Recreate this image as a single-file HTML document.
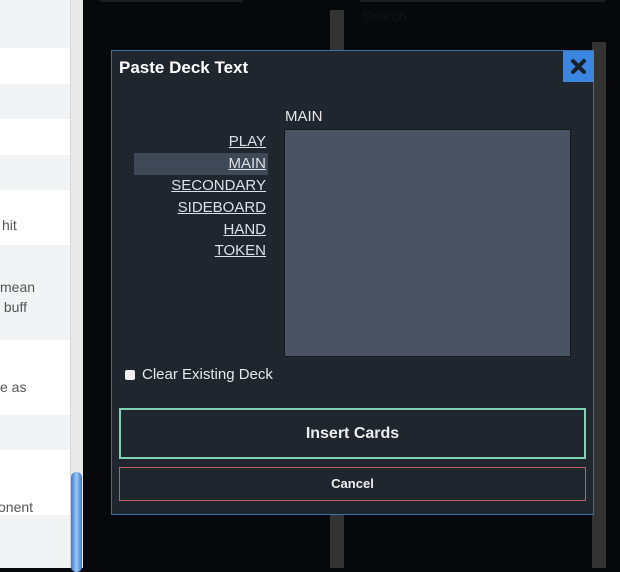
<!DOCTYPE html>
<html><head><style>
*{margin:0;padding:0;box-sizing:border-box}
body{width:620px;height:568px;overflow:hidden;background:#07080b;font-family:"Liberation Sans",Arial,sans-serif;position:relative}
.a{position:absolute}
.row{position:absolute;left:0;width:70px;color:#555;font-size:14px}
.lbl{position:absolute;right:0;width:100%;text-align:right;color:#dde0e4;font-size:15px;text-decoration:underline;line-height:22px;padding-right:2px}
</style></head><body>
<div class="a" style="left:0;top:0;width:70px;height:568px;background:#f2f3f5"></div>
<div class="row" style="top:48px;height:36px;background:#fff"></div>
<div class="row" style="top:119px;height:36px;background:#fff"></div>
<div class="row" style="top:190px;height:55px;background:#fff"><span class="a" style="left:2px;top:27px">hit</span></div>
<div class="row" style="top:245px;height:95px"><span class="a" style="left:0px;top:32px;line-height:20px">mean<br>&nbsp;buff</span></div>
<div class="row" style="top:340px;height:75px;background:#fff"><span class="a" style="left:0px;top:39px">e as</span></div>
<div class="row" style="top:450px;height:65px;background:#fff"><span class="a" style="left:-2px;top:49px">onent</span></div>
<div class="a" style="left:70px;top:0;width:13px;height:568px;background:#e9e9ea;border-left:1px solid #d8d8d8"></div>
<div class="a" style="left:71px;top:472px;width:11px;height:100px;background:linear-gradient(90deg,#3a78d0,#9cc8f4,#3a78d0);border-radius:5px"></div>
<div class="a" style="left:100px;top:0;width:143px;height:2px;background:#1a1c20"></div>
<div class="a" style="left:360px;top:0;width:245px;height:2px;background:#1a1c20"></div>
<div class="a" style="left:330px;top:10px;width:14px;height:558px;background:#333"></div>
<div class="a" style="left:592px;top:42px;width:14px;height:526px;background:#333"></div>
<div class="a" style="left:362px;top:8px;color:#111317;font-size:14px">Search</div>
<div class="a" style="left:111px;top:50px;width:483px;height:465px;background:#20262e;border:1px solid #3b6fa8">
  <div class="a" style="left:7px;top:7px;color:#fff;font-weight:bold;font-size:17px">Paste Deck Text</div>
  <div class="a" style="left:451px;top:0;width:31px;height:31px;background:#3b86e0"><svg width="31" height="31" viewBox="0 0 31 31"><path d="M10 10L21 21M21 10L10 21" stroke="#1b1f26" stroke-width="4" stroke-linecap="round"/></svg></div>
  <div class="a" style="left:173px;top:57px;color:#e6e8ea;font-size:15px">MAIN</div>
  <div class="a" style="left:22px;top:80px;width:134px;height:132px">
    <div class="lbl" style="top:0">PLAY</div>
    <div class="lbl" style="top:22px;background:#3e4857">MAIN</div>
    <div class="lbl" style="top:44px">SECONDARY</div>
    <div class="lbl" style="top:66px">SIDEBOARD</div>
    <div class="lbl" style="top:88px">HAND</div>
    <div class="lbl" style="top:109px">TOKEN</div>
  </div>
  <div class="a" style="left:172px;top:78px;width:287px;height:228px;background:#4a5364;border:1px solid #15181d"></div>
  <div class="a" style="left:13px;top:319px;width:10px;height:10px;background:#f0f0f0;border-radius:2px"></div>
  <div class="a" style="left:30px;top:315px;color:#e6e8ea;font-size:15px">Clear Existing Deck</div>
  <div class="a" style="left:7px;top:357px;width:467px;height:51px;border:2px solid #7fd0b2;color:#eee;font-weight:bold;font-size:16px;text-align:center;line-height:47px">Insert Cards</div>
  <div class="a" style="left:7px;top:416px;width:467px;height:34px;border:1px solid #c0625e;color:#eee;font-weight:bold;font-size:13px;text-align:center;line-height:32px">Cancel</div>
</div>
</body></html>
